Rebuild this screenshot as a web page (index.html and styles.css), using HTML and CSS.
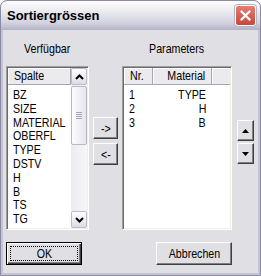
FILE: index.html
```html
<!DOCTYPE html>
<html lang="de">
<head>
    <meta charset="UTF-8">
    <meta name="viewport" content="width=device-width, initial-scale=1.0">
    <title>Sortiergrössen</title>
    <link rel="stylesheet" href="styles.css">
</head>
<body>

<div class="window">
    <div class="titlebar">
        <span class="title">Sortiergrössen</span>
        <div class="close-btn">
            <svg width="11" height="11" viewBox="0 0 11 11"><path d="M1.5 1.5L9.5 9.5M9.5 1.5L1.5 9.5" stroke="#fff" stroke-width="2.4" stroke-linecap="round"/></svg>
        </div>
    </div>

    <div class="client">
        <div class="panes">
            <div class="pane pane-left">
                <div class="pane-label"><span class="nt nt-c">Verfügbar</span></div>
                <div class="listbox">
                    <div class="list-main">
                        <div class="list-header">
                            <div class="hcell hcell-spalte"><span class="nt">Spalte</span></div>
                        </div>
                        <div class="list-rows">
                            <div class="row"><span class="nt">BZ</span></div>
                            <div class="row"><span class="nt">SIZE</span></div>
                            <div class="row"><span class="nt">MATERIAL</span></div>
                            <div class="row"><span class="nt">OBERFL</span></div>
                            <div class="row"><span class="nt">TYPE</span></div>
                            <div class="row"><span class="nt">DSTV</span></div>
                            <div class="row"><span class="nt">H</span></div>
                            <div class="row"><span class="nt">B</span></div>
                            <div class="row"><span class="nt">TS</span></div>
                            <div class="row"><span class="nt">TG</span></div>
                        </div>
                    </div>
                    <div class="vscroll">
                        <div class="sb-btn">
                            <svg width="9" height="6" viewBox="0 0 9 6"><polyline points="1,5 4.5,1.5 8,5" fill="none" stroke="#000" stroke-width="2"/></svg>
                        </div>
                        <div class="sb-track">
                            <div class="sb-thumb">
                                <span class="grip"></span>
                                <span class="grip"></span>
                                <span class="grip"></span>
                                <span class="grip"></span>
                            </div>
                        </div>
                        <div class="sb-btn">
                            <svg width="9" height="6" viewBox="0 0 9 6"><polyline points="1,1 4.5,4.5 8,1" fill="none" stroke="#000" stroke-width="2"/></svg>
                        </div>
                    </div>
                </div>
            </div>

            <div class="move-btns">
                <button class="btn btn-move"><span class="nt nt-c">-&gt;</span></button>
                <button class="btn btn-move"><span class="nt nt-c">&lt;-</span></button>
            </div>

            <div class="pane pane-right">
                <div class="pane-label"><span class="nt nt-c">Parameters</span></div>
                <div class="listbox">
                    <div class="list-main">
                        <div class="list-header">
                            <div class="hcell hcell-nr"><span class="nt">Nr.</span></div>
                            <div class="hcell hcell-mat"><span class="nt nt-r">Material</span></div>
                            <div class="hcell hcell-fill"></div>
                        </div>
                        <div class="list-rows">
                            <div class="row row-param"><span class="col-nr"><span class="nt">1</span></span><span class="col-mat"><span class="nt nt-r">TYPE</span></span></div>
                            <div class="row row-param"><span class="col-nr"><span class="nt">2</span></span><span class="col-mat"><span class="nt nt-r">H</span></span></div>
                            <div class="row row-param"><span class="col-nr"><span class="nt">3</span></span><span class="col-mat"><span class="nt nt-r">B</span></span></div>
                        </div>
                    </div>
                </div>
            </div>

            <div class="order-btns">
                <button class="btn btn-order">
                    <svg width="7" height="4" viewBox="0 0 7 4"><polygon points="0,4 3.5,0 7,4" fill="#000"/></svg>
                </button>
                <button class="btn btn-order">
                    <svg width="7" height="4" viewBox="0 0 7 4"><polygon points="0,0 7,0 3.5,4" fill="#000"/></svg>
                </button>
            </div>
        </div>

        <div class="footer">
            <button class="btn btn-dlg btn-default"><span class="focus"><span class="nt nt-c">OK</span></span></button>
            <button class="btn btn-dlg"><span class="nt nt-c">Abbrechen</span></button>
        </div>
    </div>
</div>

</body>
</html>
```

FILE: styles.css
```css
body {
    margin: 0;
    background: #fff;
    font-family: "Liberation Sans", Arial, sans-serif;
    font-size: 13px;
    color: #000;
}
/* narrow dialog font: Arial squeezed to the width of the old system font */
.nt {
    display: inline-block;
    transform: scaleX(0.82);
    transform-origin: left center;
    white-space: nowrap;
}
.nt-c {
    transform-origin: center center;
}
.nt-r {
    transform-origin: right center;
}
.window {
    width: 261px;
    height: 276px;
    box-sizing: border-box;
    border: 1px solid #8a8aa2;
    border-radius: 7px 7px 0 0;
    background: #c4c4d4;
    padding: 0 2px 2px;
    display: flex;
    flex-direction: column;
    overflow: hidden;
}
.titlebar {
    height: 29px;
    flex: none;
    margin: 0 -2px;
    padding: 0 4px 0 6px;
    display: flex;
    align-items: center;
    justify-content: space-between;
    background: linear-gradient(#fdfdfe 0%, #ebebf1 35%, #d3d3df 75%, #b2b2c6 100%);
    border-radius: 6px 6px 0 0;
}
.title {
    font-weight: bold;
    font-size: 13px;
}
.close-btn {
    width: 21px;
    height: 21px;
    box-sizing: border-box;
    border: 1px solid #fff;
    border-radius: 3px;
    background: linear-gradient(#e67d72, #c8473c);
    box-shadow: 0 0 0 1px #b5b5c5;
    display: flex;
    align-items: center;
    justify-content: center;
}
.client {
    flex: 1;
    background: #e0dfe3;
    padding: 11px 0 0 3px;
}
.panes {
    display: flex;
    align-items: flex-start;
}
.pane-left {
    width: 83px;
}
.pane-right {
    width: 110px;
}
.pane-label {
    height: 16px;
    line-height: 16px;
    text-align: center;
    margin-bottom: 9px;
}
.listbox {
    height: 164px;
    box-sizing: border-box;
    border: 1px solid;
    border-color: #a0a0a0 #fff #fff #a0a0a0;
    box-shadow: inset 1px 1px #696969, inset -1px -1px #f1efe2;
    padding: 1px;
    background: #fff;
    display: flex;
}
.list-main {
    flex: 1;
    min-width: 0;
    display: flex;
    flex-direction: column;
}
.list-header {
    display: flex;
    height: 16px;
    border-bottom: 1px solid #a6a6ae;
    background: #ebeaee;
}
.hcell {
    box-sizing: border-box;
    line-height: 16px;
    padding-left: 6px;
    border-right: 1px solid #a6a6ae;
    box-shadow: inset 1px 1px #fff;
    white-space: nowrap;
}
.hcell-spalte {
    flex: 1;
}
.hcell-nr {
    width: 29px;
}
.hcell-mat {
    width: 59px;
    text-align: right;
    padding-right: 6px;
}
.hcell-fill {
    flex: 1;
    border-right: none;
}
.list-rows {
    padding-top: 3px;
}
.row {
    height: 13.8px;
    line-height: 13.8px;
    padding-left: 5px;
    white-space: nowrap;
}
.row-param {
    display: flex;
    padding-left: 0;
}
.col-nr {
    width: 29px;
    box-sizing: border-box;
    padding-left: 5px;
}
.col-mat {
    width: 59px;
    box-sizing: border-box;
    text-align: right;
    padding-right: 6px;
}
.vscroll {
    width: 16px;
    display: flex;
    flex-direction: column;
    background: linear-gradient(to right, #ececf0, #f7f7f9);
}
.sb-btn {
    height: 17px;
    box-sizing: border-box;
    border: 1px solid #bcbccc;
    border-radius: 2px;
    background: linear-gradient(#ffffff, #dcdce6);
    display: flex;
    align-items: center;
    justify-content: center;
}
.sb-track {
    flex: 1;
}
.sb-thumb {
    height: 59px;
    margin-top: 1px;
    box-sizing: border-box;
    border: 1px solid #b8b8c8;
    border-radius: 2px;
    background: linear-gradient(to right, #fdfdff, #e4e4ec);
    display: flex;
    flex-direction: column;
    align-items: center;
    justify-content: center;
    gap: 1px;
}
.grip {
    width: 6px;
    height: 1px;
    background: #a4a4b4;
}
.btn {
    font: inherit;
    color: #000;
    background: #e0dfe3;
    border: 1px solid;
    border-color: #fff #404040 #404040 #fff;
    box-shadow: inset -1px -1px #808080;
    margin: 0;
    padding: 0;
    box-sizing: border-box;
    display: flex;
    align-items: center;
    justify-content: center;
}
.move-btns {
    width: 25px;
    margin: 0 4px;
    padding-top: 76px;
    display: flex;
    flex-direction: column;
    gap: 4px;
}
.btn-move {
    width: 25px;
    height: 22px;
}
.order-btns {
    width: 17px;
    margin-left: 5px;
    padding-top: 79px;
    display: flex;
    flex-direction: column;
    gap: 2px;
}
.btn-order {
    width: 17px;
    height: 21px;
}
.footer {
    width: 226px;
    margin-top: 12px;
    display: flex;
    justify-content: space-between;
}
.btn-dlg {
    width: 76px;
    height: 23px;
}
.btn-default {
    border: 1px solid #000;
    box-shadow: inset 1px 1px #fff, inset -1px -1px #404040, inset -2px -2px #808080;
}
.focus {
    width: 68px;
    height: 15px;
    box-sizing: border-box;
    border: 1px dotted #000;
    display: flex;
    align-items: center;
    justify-content: center;
}
```
